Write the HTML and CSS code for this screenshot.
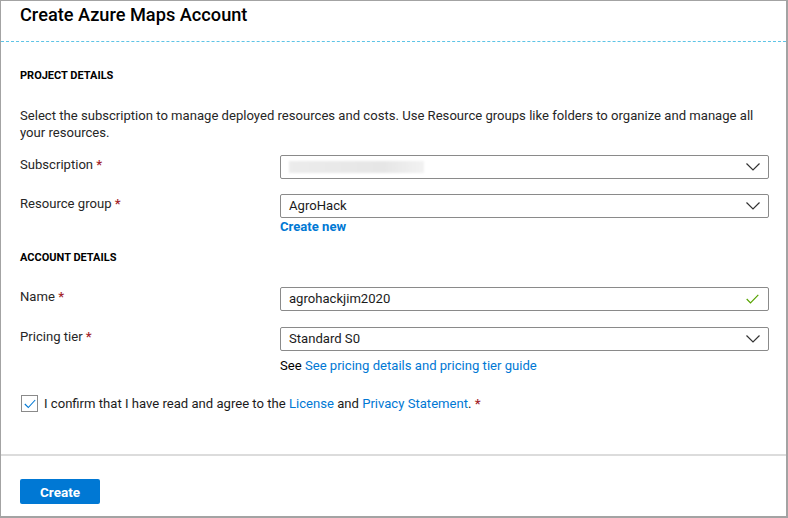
FILE: index.html
```html
<!DOCTYPE html>
<html>
<head>
<meta charset="utf-8">
<link rel="stylesheet" href="styles.css">
</head>
<body>
<div class="frame">
  <header class="head"><h1 class="title">Create Azure Maps Account</h1></header>
  <main class="body">
    <h2 class="section">PROJECT DETAILS</h2>
    <p class="desc">Select the subscription to manage deployed resources and costs. Use Resource groups like folders to organize and manage all your resources.</p>
    <div class="row row-sub">
      <label class="label">Subscription <span class="req">*</span></label>
      <div class="field">
        <div class="box"><span class="blur"></span>
          <svg class="chev" width="14" height="8" viewBox="0 0 14 8"><path d="M0.5 0.5 L7 7 L13.5 0.5" fill="none" stroke="#333" stroke-width="1.2"/></svg>
        </div>
      </div>
    </div>
    <div class="row">
      <label class="label">Resource group <span class="req">*</span></label>
      <div class="field">
        <div class="box"><span class="val">AgroHack</span>
          <svg class="chev" width="14" height="8" viewBox="0 0 14 8"><path d="M0.5 0.5 L7 7 L13.5 0.5" fill="none" stroke="#333" stroke-width="1.2"/></svg>
        </div>
        <a class="create-new">Create new</a>
      </div>
    </div>
    <h2 class="section section2">ACCOUNT DETAILS</h2>
    <div class="row row-name">
      <label class="label">Name <span class="req">*</span></label>
      <div class="field">
        <div class="box"><span class="val">agrohackjim2020</span>
          <svg class="check" width="13" height="10" viewBox="0 0 13 10"><path d="M0.7 5 L4.5 8.8 L12.3 0.8" fill="none" stroke="#57a300" stroke-width="1.2"/></svg>
        </div>
      </div>
    </div>
    <div class="row">
      <label class="label">Pricing tier <span class="req">*</span></label>
      <div class="field">
        <div class="box"><span class="val">Standard S0</span>
          <svg class="chev" width="14" height="8" viewBox="0 0 14 8"><path d="M0.5 0.5 L7 7 L13.5 0.5" fill="none" stroke="#333" stroke-width="1.2"/></svg>
        </div>
        <div class="see">See <a class="link">See pricing details and pricing tier guide</a></div>
      </div>
    </div>
    <div class="confirm">
      <span class="cb"><svg width="12" height="10" viewBox="0 0 12 10"><path d="M0.8 5 L4.3 8.5 L11.2 1" fill="none" stroke="#0078d4" stroke-width="1.1"/></svg></span>
      <span>I confirm that I have read and agree to the <a class="link">License</a> and <a class="link">Privacy Statement</a>. <span class="req">*</span></span>
    </div>
  </main>
  <footer class="foot">
    <button class="btn">Create</button>
  </footer>
</div>
</body>
</html>
```

FILE: styles.css
```css
* { box-sizing: border-box; }
html, body { margin: 0; padding: 0; background: #fff; }
body { font-family: Roboto, "Noto Sans", sans-serif; color: #1b1b1b; }
.frame {
  width: 788px;
  height: 518px;
  border: 1px solid #a3a3a3;
  border-width: 1px 2px 2px 1px;
  display: flex;
  flex-direction: column;
}
.head {
  height: 41px;
  border-bottom: 1px dashed #5ec4e6;
  padding: 0 19px;
}
.title {
  margin: 0;
  font-size: 18.2px;
  font-weight: 500;
  line-height: 26px;
  padding-top: 1px;
  color: #000;
}
.body {
  flex: 1;
  padding: 0 17px 0 19px;
  font-size: 13.1px;
  color: #262626;
}
.section {
  margin: 26px 0 0;
  font-size: 11px;
  font-weight: 700;
  line-height: 16px;
  color: #000;
}
.section2 { margin-top: 14px; }
.desc {
  margin: 24px 0 0;
  line-height: 16.5px;
}
.row {
  display: grid;
  grid-template-columns: 260px 1fr;
}
.row-sub { margin-top: 14px; }
.row + .row { margin-top: 15px; }
.row-name { margin-top: 21px; }
.row-name + .row { margin-top: 16px; }
.label { line-height: 20px; }
.req { color: #a4262c; font-weight: 600; }
.box {
  height: 24px;
  border: 1px solid #8a8a8a;
  border-radius: 2px;
  display: flex;
  align-items: center;
  padding: 0 8px;
  position: relative;
}
.val { flex: 1; line-height: 20px; color: #1b1b1b; }
.blur {
  width: 135px;
  height: 12px;
  background: linear-gradient(90deg, #ececec 0%, #e6e6e6 70%, #f2f2f2 100%);
  filter: blur(1px);
  margin-right: auto;
}
.chev { margin-left: auto; }
.check { margin-left: auto; margin-right: 1px; }
.create-new {
  display: block;
  color: #0078d4;
  font-weight: 700;
  line-height: 18px;
  margin-top: 0;
}
.see { line-height: 18px; margin-top: 6px; color: #000; }
.link { color: #0078d4; text-decoration: none; }
.confirm {
  display: flex;
  align-items: center;
  gap: 6px;
  margin-top: 20px;
  color: #1b1b1b;
}
.cb {
  width: 17px;
  height: 17px;
  border: 1px solid #8a8a8a;
  display: flex;
  align-items: center;
  justify-content: center;
  margin-left: 1px;
}
.foot {
  height: 62px;
  border-top: 2px solid #dcdcdc;
  padding: 23px 19px 0;
}
.btn {
  width: 80px;
  height: 25px;
  background: #0078d4;
  color: #fff;
  border: none;
  border-radius: 2px;
  font-family: Roboto, sans-serif;
  font-size: 13.5px;
  font-weight: 700;
  padding: 0;
}
```
